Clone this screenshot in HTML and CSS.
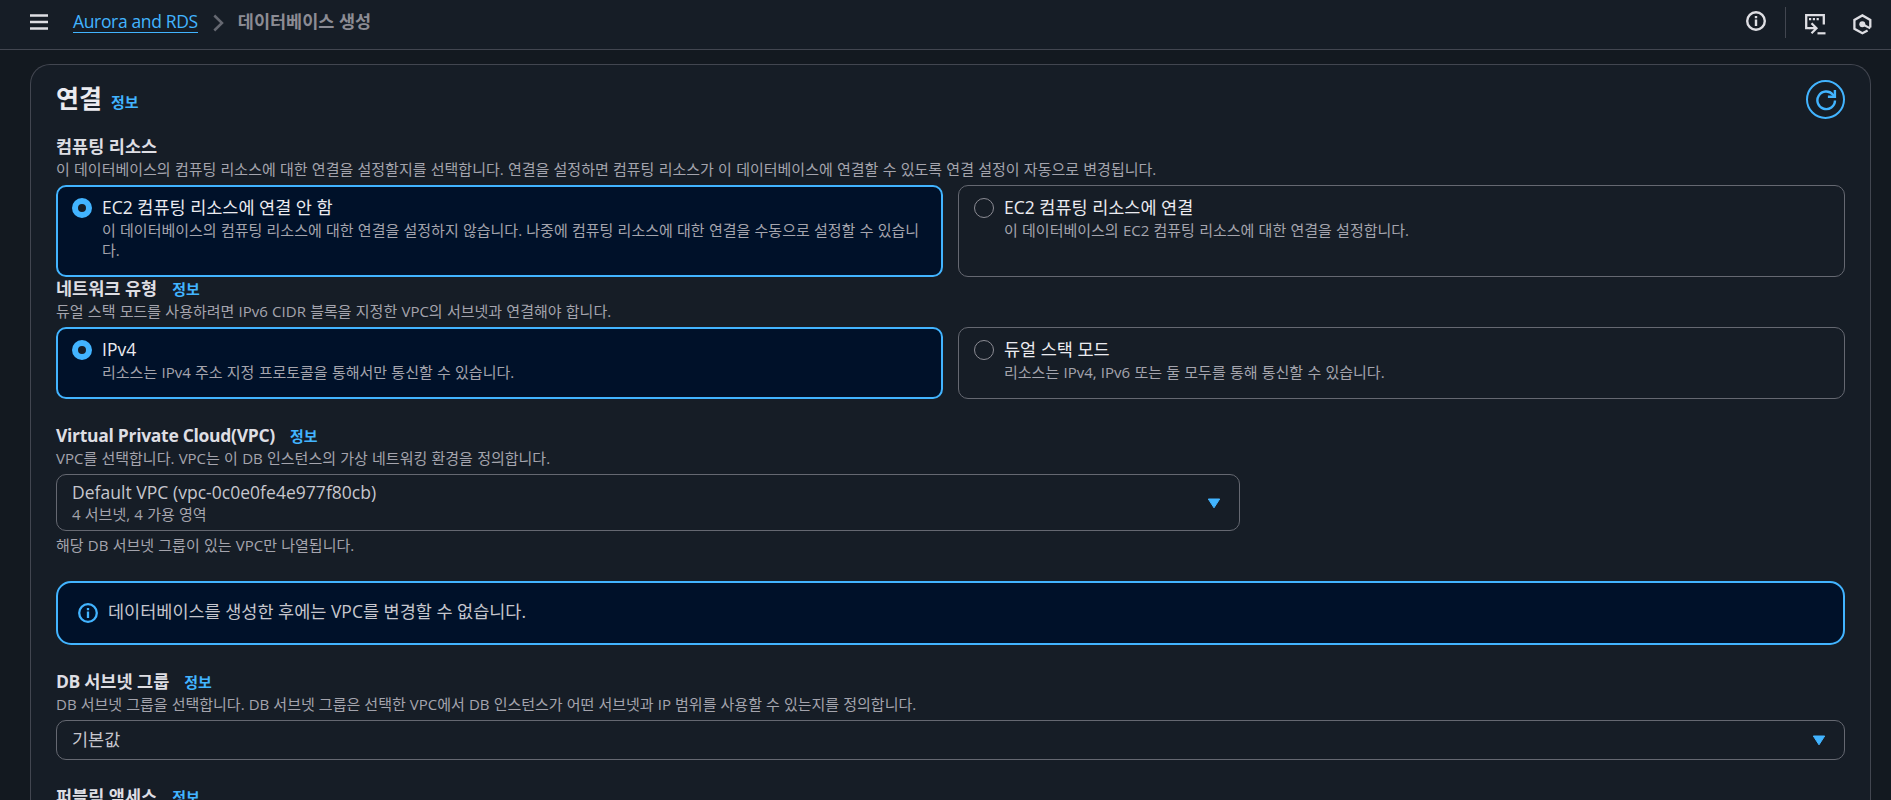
FILE: index.html
```html
<!DOCTYPE html>
<html lang="ko">
<head>
<meta charset="utf-8">
<title>데이터베이스 생성</title>
<link rel="stylesheet" href="styles.css">
</head>
<body>
<header class="topbar">
  <svg class="menu" width="18" height="16" viewBox="0 0 18 16"><path d="M0 1.5h18M0 8h18M0 14.5h18" stroke="#dedee3" stroke-width="2.3" fill="none"/></svg>
  <a class="crumb-link">Aurora and RDS</a>
  <svg class="chevron" width="11" height="18" viewBox="0 0 11 18"><path d="M1.3 1.5L9 9L1.3 16.5" stroke="#656871" stroke-width="2.5" fill="none"/></svg>
  <span class="crumb-current">데이터베이스 생성</span>
  <div class="tools">
    <svg class="tool-info" width="20" height="20" viewBox="0 0 20 20"><circle cx="10" cy="10" r="8.8" fill="none" stroke="#dedee3" stroke-width="2.4"/><path d="M10 8.5V15M10 5v2.3" fill="none" stroke="#dedee3" stroke-width="2.4"/></svg>
    <span class="divider"></span>
    <svg class="tool-shell" width="21" height="21" viewBox="0 0 21 21"><path d="M5 14.2H1.2V1.2H18.8V10.5" fill="none" stroke="#dedee3" stroke-width="2.3"/><path d="M4 5.2h2.2M7.8 5.2H10M11.6 5.2h2.2" stroke="#dedee3" stroke-width="2.2"/><path d="M4.5 14.2h7M6.5 9.2L11.5 14.2L6.5 19.2" fill="none" stroke="#dedee3" stroke-width="2.2"/><path d="M12.5 19.3h8" stroke="#dedee3" stroke-width="2.2"/></svg>
    <svg class="tool-hex" width="19" height="21" viewBox="0 0 19 21"><path d="M17.3 13.6V5.9L9.4 1.4L1.4 5.9V14.8L9.4 19.3L14.6 16.4" fill="none" stroke="#dedee3" stroke-width="2.3"/><circle cx="9.3" cy="10.3" r="3" fill="#dedee3"/><path d="M9.5 10.3L17.3 14.4" stroke="#dedee3" stroke-width="2.2"/></svg>
  </div>
</header>
<main class="panel">
  <div class="panel-head">
    <h2 class="title">연결</h2><a class="info">정보</a>
    <button class="refresh"><svg width="22" height="22" viewBox="0 0 22 22"><path d="M20 11.5A8.8 8.8 0 1 1 17.8 5.5L19.5 7.3" fill="none" stroke="#42b4ff" stroke-width="2.4"/><path d="M19.9 1v6.8h-7" fill="none" stroke="#42b4ff" stroke-width="2.4"/></svg></button>
  </div>
  <section class="field compute">
    <div class="label">컴퓨팅 리소스</div>
    <div class="desc">이 데이터베이스의 컴퓨팅 리소스에 대한 연결을 설정할지를 선택합니다. 연결을 설정하면 컴퓨팅 리소스가 이 데이터베이스에 연결할 수 있도록 연결 설정이 자동으로 변경됩니다.</div>
    <div class="tiles">
      <div class="tile tall selected"><span class="radio"></span><div class="tile-body"><div class="tile-label">EC2 컴퓨팅 리소스에 연결 안 함</div><div class="desc">이 데이터베이스의 컴퓨팅 리소스에 대한 연결을 설정하지 않습니다. 나중에 컴퓨팅 리소스에 대한 연결을 수동으로 설정할 수 있습니다.</div></div></div>
      <div class="tile tall"><span class="radio"></span><div class="tile-body"><div class="tile-label">EC2 컴퓨팅 리소스에 연결</div><div class="desc">이 데이터베이스의 EC2 컴퓨팅 리소스에 대한 연결을 설정합니다.</div></div></div>
    </div>
  </section>
  <section class="field network">
    <div class="label">네트워크 유형<a class="info">정보</a></div>
    <div class="desc">듀얼 스택 모드를 사용하려면 IPv6 CIDR 블록을 지정한 VPC의 서브넷과 연결해야 합니다.</div>
    <div class="tiles">
      <div class="tile selected"><span class="radio"></span><div class="tile-body"><div class="tile-label">IPv4</div><div class="desc">리소스는 IPv4 주소 지정 프로토콜을 통해서만 통신할 수 있습니다.</div></div></div>
      <div class="tile"><span class="radio"></span><div class="tile-body"><div class="tile-label">듀얼 스택 모드</div><div class="desc">리소스는 IPv4, IPv6 또는 둘 모두를 통해 통신할 수 있습니다.</div></div></div>
    </div>
  </section>
  <section class="field vpc">
    <div class="label"><span class="latin-bold">Virtual Private Cloud(VPC)</span><a class="info">정보</a></div>
    <div class="desc">VPC를 선택합니다. VPC는 이 DB 인스턴스의 가상 네트워킹 환경을 정의합니다.</div>
    <div class="select select-vpc"><div><div class="value latin">Default VPC (vpc-0c0e0fe4e977f80cb)</div><div class="desc">4 서브넷, 4 가용 영역</div></div><svg class="caret" width="14" height="11" viewBox="0 0 14 11"><path d="M1.3 1h11.4L7 9.8z" fill="#42b4ff" stroke="#42b4ff" stroke-width="1" stroke-linejoin="round"/></svg></div>
    <div class="desc hint">해당 DB 서브넷 그룹이 있는 VPC만 나열됩니다.</div>
  </section>
  <div class="alert"><svg width="20" height="20" viewBox="0 0 20 20"><circle cx="10" cy="10" r="8.8" fill="none" stroke="#42b4ff" stroke-width="2.3"/><path d="M10 8.5V15M10 5v2.3" fill="none" stroke="#42b4ff" stroke-width="2.3"/></svg><span>데이터베이스를 생성한 후에는 VPC를 변경할 수 없습니다.</span></div>
  <section class="field subnet">
    <div class="label"><span class="latin-short">DB</span> 서브넷 그룹<a class="info">정보</a></div>
    <div class="desc desc-subnet">DB 서브넷 그룹을 선택합니다. DB 서브넷 그룹은 선택한 VPC에서 DB 인스턴스가 어떤 서브넷과 IP 범위를 사용할 수 있는지를 정의합니다.</div>
    <div class="select"><div class="value">기본값</div><svg class="caret" width="14" height="11" viewBox="0 0 14 11"><path d="M1.3 1h11.4L7 9.8z" fill="#42b4ff" stroke="#42b4ff" stroke-width="1" stroke-linejoin="round"/></svg></div>
  </section>
  <section class="field public">
    <div class="label">퍼블릭 액세스<a class="info">정보</a></div>
  </section>
</main>
</body>
</html>
```
FILE: styles.css
```css
* { box-sizing: border-box; }
body {
  display: flex;
  flex-direction: column;
  height: 100vh;
  margin: 0;
  overflow: hidden;
  background: #131920;
  color: #dedee3;
  font: 17.5px/25px "Open Sans", "Noto Sans CJK KR", sans-serif;
}
svg { display: block; flex: none; }
.topbar {
  display: flex;
  flex: none;
  align-items: center;
  height: 50px;
  padding: 0 19px 6px 30px;
  background: #161d26;
  border-bottom: 1px solid #424650;
}
.crumb-link {
  margin-left: 25px;
  line-height: 22px;
  color: #42b4ff;
  border-bottom: 1px solid #42b4ff;
  letter-spacing: -0.35px;
}
.chevron { margin-left: 15px; margin-top: 3px; }
.crumb-current { margin-left: 14px; color: #8c8c94; font-weight: 700; }
.tools { display: flex; align-items: center; margin-left: auto; }
.tool-info { margin-top: -1px; }
.divider { width: 1px; height: 31px; margin: 2px 19px 0; background: #424650; }
.tool-shell { margin-top: 5px; }
.tool-hex { margin: 5px 0 0 27px; }
.panel {
  flex: 1;
  min-height: 0;
  margin: 14px 20px 0 30px;
  padding: 16px 25px 0;
  border: 1px solid #424650;
  border-bottom: 0;
  border-radius: 20px 20px 0 0;
  background: #161d26;
}
.panel-head { display: flex; height: 53px; }
.title { margin: -1px 0 0; font-size: 25px; line-height: 36px; font-weight: 700; color: #ebebf0; }
.info { font-size: 15px; font-weight: 700; color: #42b4ff; }
.panel-head .info { margin: 9px 0 0 9px; }
.refresh {
  display: flex;
  align-items: center;
  justify-content: center;
  width: 39px;
  height: 39px;
  margin: -1px 0 0 auto;
  padding: 0;
  border: 2px solid #42b4ff;
  border-radius: 50%;
  background: transparent;
}
.label { height: 25px; color: #dedee3; font-weight: 700; white-space: nowrap; }
.label .info { margin-left: 15px; }
.desc { font-size: 15px; line-height: 20px; color: #a4a4ad; word-break: break-all; word-spacing: 0.35px; }
.desc-subnet { word-spacing: 0.2px; }
.tiles { display: grid; grid-template-columns: 1fr 1fr; gap: 15px; margin-top: 6px; }
.tile {
  display: flex;
  height: 72px;
  padding: 9px 15px;
  border: 1px solid #656871;
  border-radius: 10px;
}
.tile.tall { height: 92px; }
.tile.selected { padding: 8px 14px; border: 2px solid #42b4ff; background: #001129; }
.radio {
  flex: none;
  width: 20px;
  height: 20px;
  margin: 3px 10px 0 0;
  border: 1px solid #8c8c94;
  border-radius: 50%;
}
.selected .radio { border: 6px solid #42b4ff; background: #161d26; }
.tile-label { color: #ebebf0; }
.network { margin-top: -1px; }
.vpc { margin-top: 24px; }
.select {
  display: flex;
  align-items: center;
  justify-content: space-between;
  height: 40px;
  margin-top: 6px;
  padding: 0 18px 3px 15px;
  border: 1px solid #656871;
  border-radius: 10px;
}
.select .value { line-height: 24px; color: #c6c6cd; }
.select-vpc { width: 1184px; height: 57px; padding-bottom: 2px; }
.caret { margin-top: 3px; }
.hint { margin-top: 4px; }
.alert {
  display: flex;
  align-items: center;
  height: 64px;
  margin-top: 26px;
  padding: 0 20px;
  border: 2px solid #42b4ff;
  border-radius: 15px;
  background: #001129;
}
.alert span { margin: -4px 0 0 10px; color: #c6c6cd; }
.subnet { margin-top: 24px; }
.public { height: 12px; margin-top: 24px; }
.latin { letter-spacing: 0.03px; }
.latin-bold { letter-spacing: -0.3px; }
.latin-short { letter-spacing: -0.5px; }
```
